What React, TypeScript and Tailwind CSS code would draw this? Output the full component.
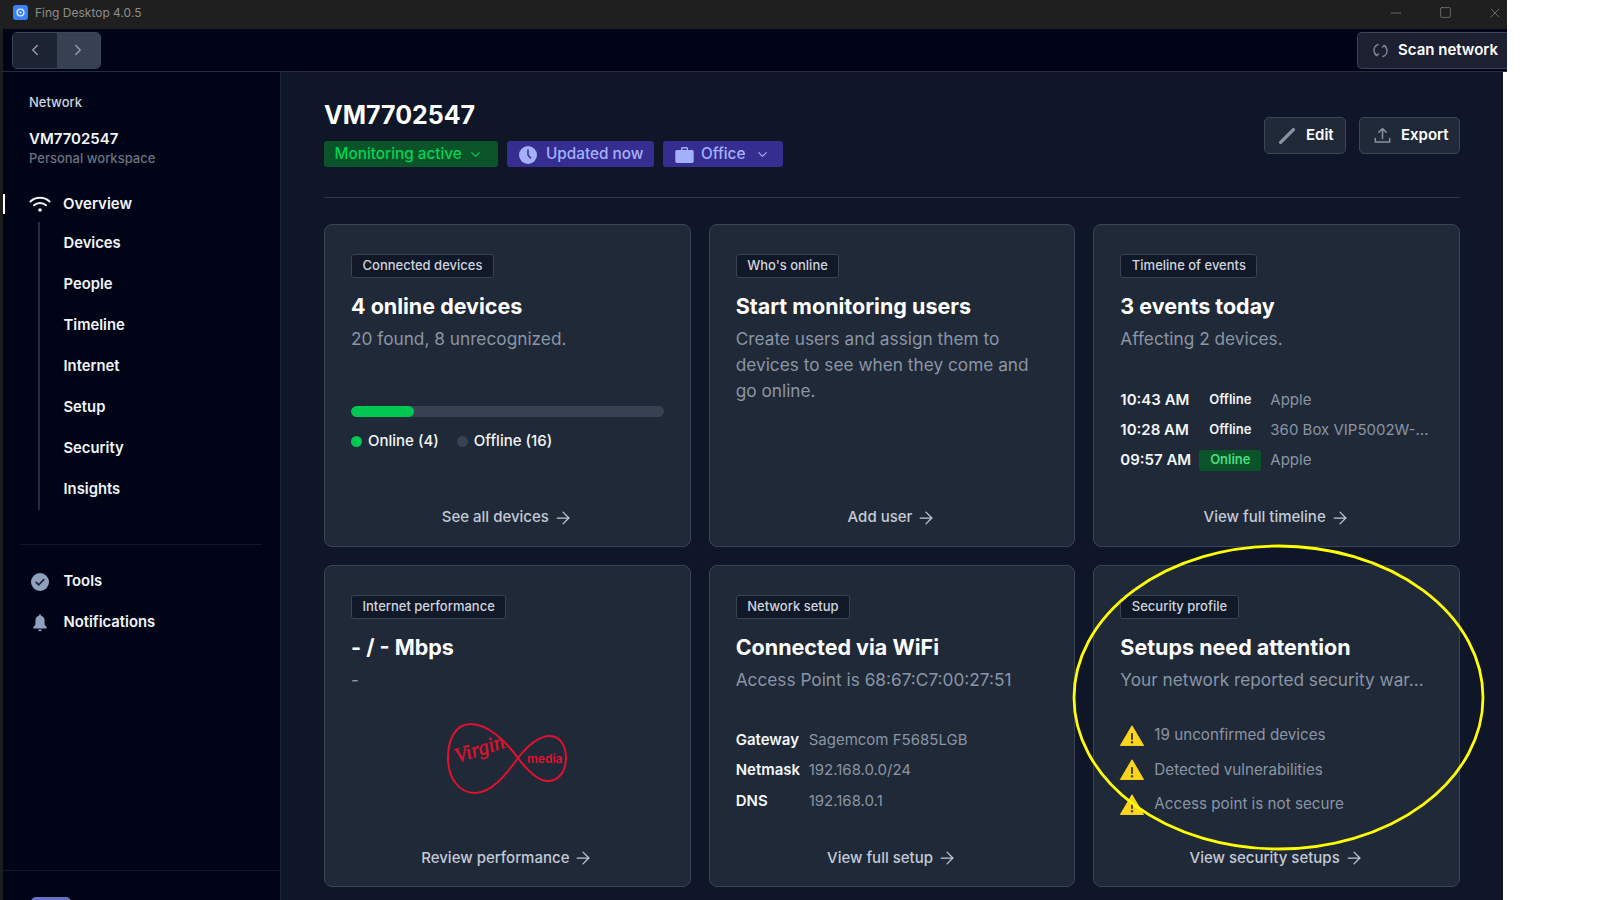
import React from "react";
import { ChevronLeft, ChevronRight, ChevronDown, ArrowRight, Minus, X, Square } from "lucide-react";

const Wifi = () => (
  <svg width="22" height="18" viewBox="0 0 22 18" fill="none" stroke="#f1f5f9" strokeWidth="2" strokeLinecap="round">
    <path d="M1.5 6.5C6.5 1.5 15.5 1.5 20.5 6.5" />
    <path d="M5 10.2C8.2 7.2 13.8 7.2 17 10.2" />
    <circle cx="11" cy="15" r="1.8" fill="#f1f5f9" stroke="none" />
  </svg>
);

const Warn = () => (
  <svg width="24" height="21" viewBox="0 0 24 21" className="mb-[1px] shrink-0">
    <path d="M12 0.8L23.6 20.6H0.4Z" fill="#fdd51e" stroke="#fdd51e" strokeLinejoin="round" />
    <rect x="11" y="8" width="2" height="7" rx="0.8" fill="#4a4420" />
    <circle cx="12" cy="17.3" r="1.2" fill="#4a4420" />
  </svg>
);

const Chip = ({ children }: { children: React.ReactNode }) => (
  <div className="inline-flex h-[24px] items-center self-start rounded-[3px] border border-[#394352] bg-[#111827] px-[10.5px] text-[13px] font-medium text-[#cfd5df]">
    {children}
  </div>
);

const Foot = ({ children }: { children: React.ReactNode }) => (
  <div className="mt-auto flex h-[24px] items-center justify-center gap-[4px] text-[15px] font-medium text-[#c3cad6]">
    {children}
    <ArrowRight size={20} strokeWidth={1.5} />
  </div>
);

const Card = ({
  chip,
  title,
  sub,
  foot,
  children,
}: {
  chip: string;
  title: string;
  sub?: React.ReactNode;
  foot: string;
  children?: React.ReactNode;
}) => (
  <div className="flex h-[322.5px] flex-col rounded-[8px] border border-[#3a4455] bg-[#1f2937] px-[26px] pb-[16px] pt-[29px]">
    <Chip>{chip}</Chip>
    <div className="mt-[13px] text-[21.5px] font-bold leading-[30px] text-white">{title}</div>
    <div className="mt-[5px] text-[17.25px] leading-[26px] text-[#8b95a5]">{sub}</div>
    {children}
    <Foot>{foot}</Foot>
  </div>
);

const Row = ({ time, status, device }: { time: string; status: string; device: string }) => (
  <div className="flex h-[30px] items-center">
    <div className="w-[79px] text-[15px] font-semibold text-[#f4f6f9]">{time}</div>
    <div
      className={
        "flex h-[21px] w-[62px] items-center justify-center rounded-[3px] text-[13px] font-semibold " +
        (status === "Online" ? "bg-[#0b5329] text-[#4ade80]" : "text-[#f4f6f9]")
      }
    >
      {status}
    </div>
    <div className="ml-[9px] whitespace-nowrap text-[15px] text-[#8b95a5]">{device}</div>
  </div>
);

const KV = ({ k, v }: { k: string; v: string }) => (
  <div className="flex h-[30.5px] items-center">
    <div className="w-[73px] text-[15px] font-semibold text-[#f4f6f9]">{k}</div>
    <div className="text-[15px] text-[#8b95a5]">{v}</div>
  </div>
);

const Sec = ({ t }: { t: string }) => (
  <div className="flex h-[34.5px] items-center gap-[10px]">
    <Warn />
    <span className="text-[15.2px] text-[#8b95a5]">{t}</span>
  </div>
);

const VirginLogo = () => (
  <svg width="124" height="74" viewBox="0 0 124 74" fill="none">
    <path
      d="M73 36C60 18 42 2 26 2C10 2 3 18 3 36C3 56 14 71 30 71C46 71 60 54 73 36C84 22 94 14 105 14C115 14 121 24 121 36C121 50 113 59 103 59C92 59 82 48 73 36Z"
      stroke="#e1112f"
      strokeWidth="2"
    />
    <text
      x="12"
      y="41"
      fill="#e1112f"
      transform="rotate(-18 12 41)"
      fontFamily="'Liberation Serif', serif"
      fontStyle="italic"
      fontWeight="400"
      fontSize="21"
      stroke="#e1112f"
      strokeWidth="0.4"
    >
      Virgin
    </text>
    <text x="82" y="41" fill="#e1112f" fontFamily="Inter, sans-serif" fontWeight="600" fontSize="12">
      media
    </text>
  </svg>
);

const subNav = ["Devices", "People", "Timeline", "Internet", "Setup", "Security", "Insights"];

export default function App() {
  return (
    <div className="relative flex h-[900px] w-[1600px] flex-col overflow-hidden bg-white font-['Inter',sans-serif]">
      {/* window title bar */}
      <div className="flex h-[29px] w-[1507px] shrink-0 items-center bg-[#1f1f1f] pb-[4px] pl-[13px] text-[#8d8d8d]">
        <svg width="15" height="15" viewBox="0 0 15 15">
          <rect width="15" height="15" rx="3" fill="#3b82f6" />
          <circle cx="7.5" cy="7.5" r="3.4" fill="none" stroke="#dbeafe" strokeWidth="1.4" />
          <circle cx="7.5" cy="7.5" r="1.1" fill="#dbeafe" />
        </svg>
        <span className="ml-[7px] text-[12px]">Fing Desktop 4.0.5</span>
        <div className="ml-auto flex items-center gap-[35px] pr-[4px] text-[#8d8d8d]">
          <Minus size={16} strokeWidth={1} />
          <Square size={13} strokeWidth={1.2} />
          <X size={16} strokeWidth={1} />
        </div>
      </div>

      {/* app top bar */}
      <div className="flex h-[43px] w-[1507px] shrink-0 items-center justify-between border-b border-[#232d3f] border-l-[3px] border-l-[#1c1c1c] bg-[#010417] pl-[9px]">
        <div className="flex h-[37px] w-[89px] overflow-hidden rounded-[5px] border border-[#3b4658]">
          <div className="flex flex-1 items-center justify-center bg-[#1c2333] text-[#9ca3af]">
            <ChevronLeft size={18} strokeWidth={1.75} />
          </div>
          <div className="flex flex-1 items-center justify-center bg-[#374151] text-[#9ca3af]">
            <ChevronRight size={18} strokeWidth={1.75} />
          </div>
        </div>
        <div className="flex h-[37px] w-[150px] items-center gap-[9px] rounded-l-[5px] border border-r-0 border-[#3b4658] bg-[#1c2030] pl-[14px]">
          <svg width="17" height="17" viewBox="0 0 17 17" fill="none" stroke="#7c8492" strokeWidth="1.5" strokeLinecap="round">
            <path d="M6 2.5C3.2 3.5 1.6 6.4 2.1 9.2C2.4 11 3.4 12.4 4.6 13.3" />
            <path d="M2.8 11.8L4.8 13.6L6.5 12" />
            <path d="M11 14.5C13.8 13.5 15.4 10.6 14.9 7.8C14.6 6 13.6 4.6 12.4 3.7" />
            <path d="M14.2 5.2L12.2 3.4L10.5 5" />
          </svg>
          <span className="text-[15px] font-semibold text-white">Scan network</span>
        </div>
      </div>

      {/* body */}
      <div className="flex min-h-0 w-[1503px] flex-1 border-l-[3px] border-[#1c1c1c]">
        <aside className="flex w-[278px] shrink-0 flex-col border-r border-[#1c2536] bg-[#010416]">
          <div className="pl-[26px] pt-[22px]">
            <div className="text-[13px] font-medium leading-[16px] text-[#cbd5e1]">Network</div>
            <div className="mt-[19px] text-[15px] font-semibold leading-[20px] text-[#f4f6f9]">VM7702547</div>
            <div className="text-[13px] font-medium leading-[18px] text-[#6b7280]">Personal workspace</div>
          </div>
          <div className="relative mt-[19px] flex h-[36px] items-center pl-[26px]">
            <div className="absolute left-0 top-[8px] h-[20px] w-[2px] bg-white" />
            <Wifi />
            <span className="ml-[12px] text-[15px] font-semibold text-[#f4f6f9]">Overview</span>
          </div>
          <div className="ml-[35px] flex w-[200px] flex-col border-l-2 border-[#232d3f] pl-[23.5px] pt-[1px]">
            {subNav.map((n) => (
              <div key={n} className="flex h-[41px] items-center text-[14.8px] font-semibold text-[#f1f5f9]">
                {n}
              </div>
            ))}
          </div>
          <div className="ml-[17px] mt-[34px] w-[242px] border-t border-[#111829]" />
          <div className="mt-[16px] flex h-[41px] items-center pl-[28px]">
            <svg width="18" height="18" viewBox="0 0 18 18">
              <circle cx="9" cy="9" r="9" fill="#8fa1bf" />
              <path d="M5.2 9.3L7.8 11.8L12.8 6.6" fill="none" stroke="#1c2333" strokeWidth="1.6" strokeLinecap="round" strokeLinejoin="round" />
            </svg>
            <span className="ml-[14.5px] text-[14.8px] font-semibold text-[#f1f5f9]">Tools</span>
          </div>
          <div className="flex h-[41px] items-center pl-[28px]">
            <svg width="18" height="18" viewBox="0 0 18 18" fill="#8fa1bf">
              <path d="M9 0.5C9.7 0.5 10 1 10.1 1.7C12.4 2.3 13.6 4.2 13.6 6.6V10.6L15.8 13.6C16 14 15.8 14.4 15.3 14.4H2.7C2.2 14.4 2 14 2.2 13.6L4.4 10.6V6.6C4.4 4.2 5.6 2.3 7.9 1.7C8 1 8.3 0.5 9 0.5Z" />
              <path d="M7.2 15.4H10.8C10.7 16.5 10 17.3 9 17.3C8 17.3 7.3 16.5 7.2 15.4Z" />
            </svg>
            <span className="ml-[14.5px] text-[14.8px] font-semibold text-[#f1f5f9]">Notifications</span>
          </div>
          <div className="mt-auto h-[30px] border-t border-[#111829] pl-[28px] pt-[26px]">
            <div className="h-[10px] w-[40px] rounded-t-[5px] bg-[#6670c4]" />
          </div>
        </aside>

        <main className="min-w-0 flex-1 bg-[#0e1628] pl-[43px] pr-[43px] pt-[26px]">
          <div className="flex items-start justify-between">
            <div>
              <div className="text-[25px] font-bold leading-[34px] text-white">VM7702547</div>
              <div className="mt-[9px] flex gap-[9px] text-[15.3px] font-medium">
                <div className="flex h-[26px] w-[174px] items-center justify-between whitespace-nowrap rounded-[3px] bg-[#0b5329] pl-[10.5px] pr-[15px] pt-px text-[#00d455]">
                  Monitoring active
                  <ChevronDown size={15} strokeWidth={1.75} />
                </div>
                <div className="flex h-[26px] w-[147px] items-center gap-[9px] whitespace-nowrap rounded-[3px] bg-[#352e90] pl-[12px] pt-px text-[#a5b0fb]">
                  <svg width="18" height="18" viewBox="0 0 18 18">
                    <circle cx="9" cy="9" r="9" fill="#a5b0fb" />
                    <path d="M9 4V9L11.5 12" fill="none" stroke="#352e90" strokeWidth="1.5" strokeLinecap="round" />
                  </svg>
                  Updated now
                </div>
                <div className="flex h-[26px] w-[120px] items-center gap-[7px] rounded-[3px] bg-[#352e90] pl-[12px] pt-px text-[#a5b0fb]">
                  <svg width="19" height="18" viewBox="0 0 19 18" fill="#a5b0fb">
                    <path d="M6 4V2.6C6 1.7 6.7 1 7.6 1H11.4C12.3 1 13 1.7 13 2.6V4H17C18 4 18.7 4.7 18.7 5.7V15.3C18.7 16.3 18 17 17 17H2C1 17 0.3 16.3 0.3 15.3V5.7C0.3 4.7 1 4 2 4ZM7.4 4H11.6V2.4H7.4Z" fillRule="evenodd" />
                  </svg>
                  Office
                  <ChevronDown size={15} strokeWidth={1.75} className="ml-[3px]" />
                </div>
              </div>
            </div>
            <div className="mt-[19px] flex gap-[13px] text-[15px] font-semibold text-white">
              <div className="flex h-[37px] w-[82px] items-center gap-[10px] rounded-[5px] border border-[#3b4658] bg-[#1f2937] pl-[13px]">
                <svg width="18" height="18" viewBox="0 0 18 18" fill="none" stroke="#8a92a0" strokeWidth="3.4" strokeLinecap="round">
                  <path d="M2.6 15.4L15.4 2.6" />
                </svg>
                Edit
              </div>
              <div className="flex h-[37px] w-[101px] items-center gap-[10px] rounded-[5px] border border-[#3b4658] bg-[#1f2937] pl-[14px]">
                <svg width="17" height="17" viewBox="0 0 17 17" fill="none" stroke="#8a92a0" strokeWidth="1.5" strokeLinecap="round" strokeLinejoin="round">
                  <path d="M8.5 11.5V2M4.8 5.3L8.5 1.6L12.2 5.3M1.3 11.5V15H15.7V11.5" />
                </svg>
                Export
              </div>
            </div>
          </div>

          <div className="mt-[30px] border-t border-[#2f394a]" />

          <div className="mt-[26px] grid grid-cols-3 gap-[18px]">
            <Card chip="Connected devices" title="4 online devices" sub="20 found, 8 unrecognized." foot="See all devices">
              <div className="mt-[54px] h-[11px] w-full overflow-hidden rounded-full bg-[#374151]">
                <div className="h-full w-[20%] rounded-full bg-[#00c853]" />
              </div>
              <div className="mt-[13px] flex items-center text-[15px] font-medium text-[#f4f6f9]">
                <span className="h-[11px] w-[11px] rounded-full bg-[#00c853]" />
                <span className="ml-[6px]">Online (4)</span>
                <span className="ml-[18px] h-[11px] w-[11px] rounded-full bg-[#374151]" />
                <span className="ml-[6px]">Offline (16)</span>
              </div>
            </Card>

            <Card
              chip="Who's online"
              title="Start monitoring users"
              sub={
                <>
                  Create users and assign them to
                  <br />
                  devices to see when they come and
                  <br />
                  go online.
                </>
              }
              foot="Add user"
            />

            <Card chip="Timeline of events" title="3 events today" sub="Affecting 2 devices." foot="View full timeline">
              <div className="mt-[33px] flex flex-col">
                <Row time="10:43 AM" status="Offline" device="Apple" />
                <Row time="10:28 AM" status="Offline" device="360 Box VIP5002W-..." />
                <Row time="09:57 AM" status="Online" device="Apple" />
              </div>
            </Card>

            <Card chip="Internet performance" title="- / - Mbps" sub="-" foot="Review performance">
              <div className="mt-[29px] flex justify-center">
                <VirginLogo />
              </div>
            </Card>

            <Card chip="Network setup" title="Connected via WiFi" sub="Access Point is 68:67:C7:00:27:51" foot="View full setup">
              <div className="mt-[32px] flex flex-col">
                <KV k="Gateway" v="Sagemcom F5685LGB" />
                <KV k="Netmask" v="192.168.0.0/24" />
                <KV k="DNS" v="192.168.0.1" />
              </div>
            </Card>

            <Card chip="Security profile" title="Setups need attention" sub="Your network reported security war..." foot="View security setups">
              <div className="mt-[26px] flex flex-col">
                <Sec t="19 unconfirmed devices" />
                <Sec t="Detected vulnerabilities" />
                <Sec t="Access point is not secure" />
              </div>
            </Card>
          </div>
        </main>
      </div>

      {/* yellow annotation drawn over the screenshot */}
      <svg className="absolute left-[1070px] top-[543px]" width="418" height="310" viewBox="0 0 418 310" fill="none">
        <ellipse cx="208.5" cy="154.5" rx="204.5" ry="151.5" stroke="#ffff00" strokeWidth="2.8" />
      </svg>
    </div>
  );
}
